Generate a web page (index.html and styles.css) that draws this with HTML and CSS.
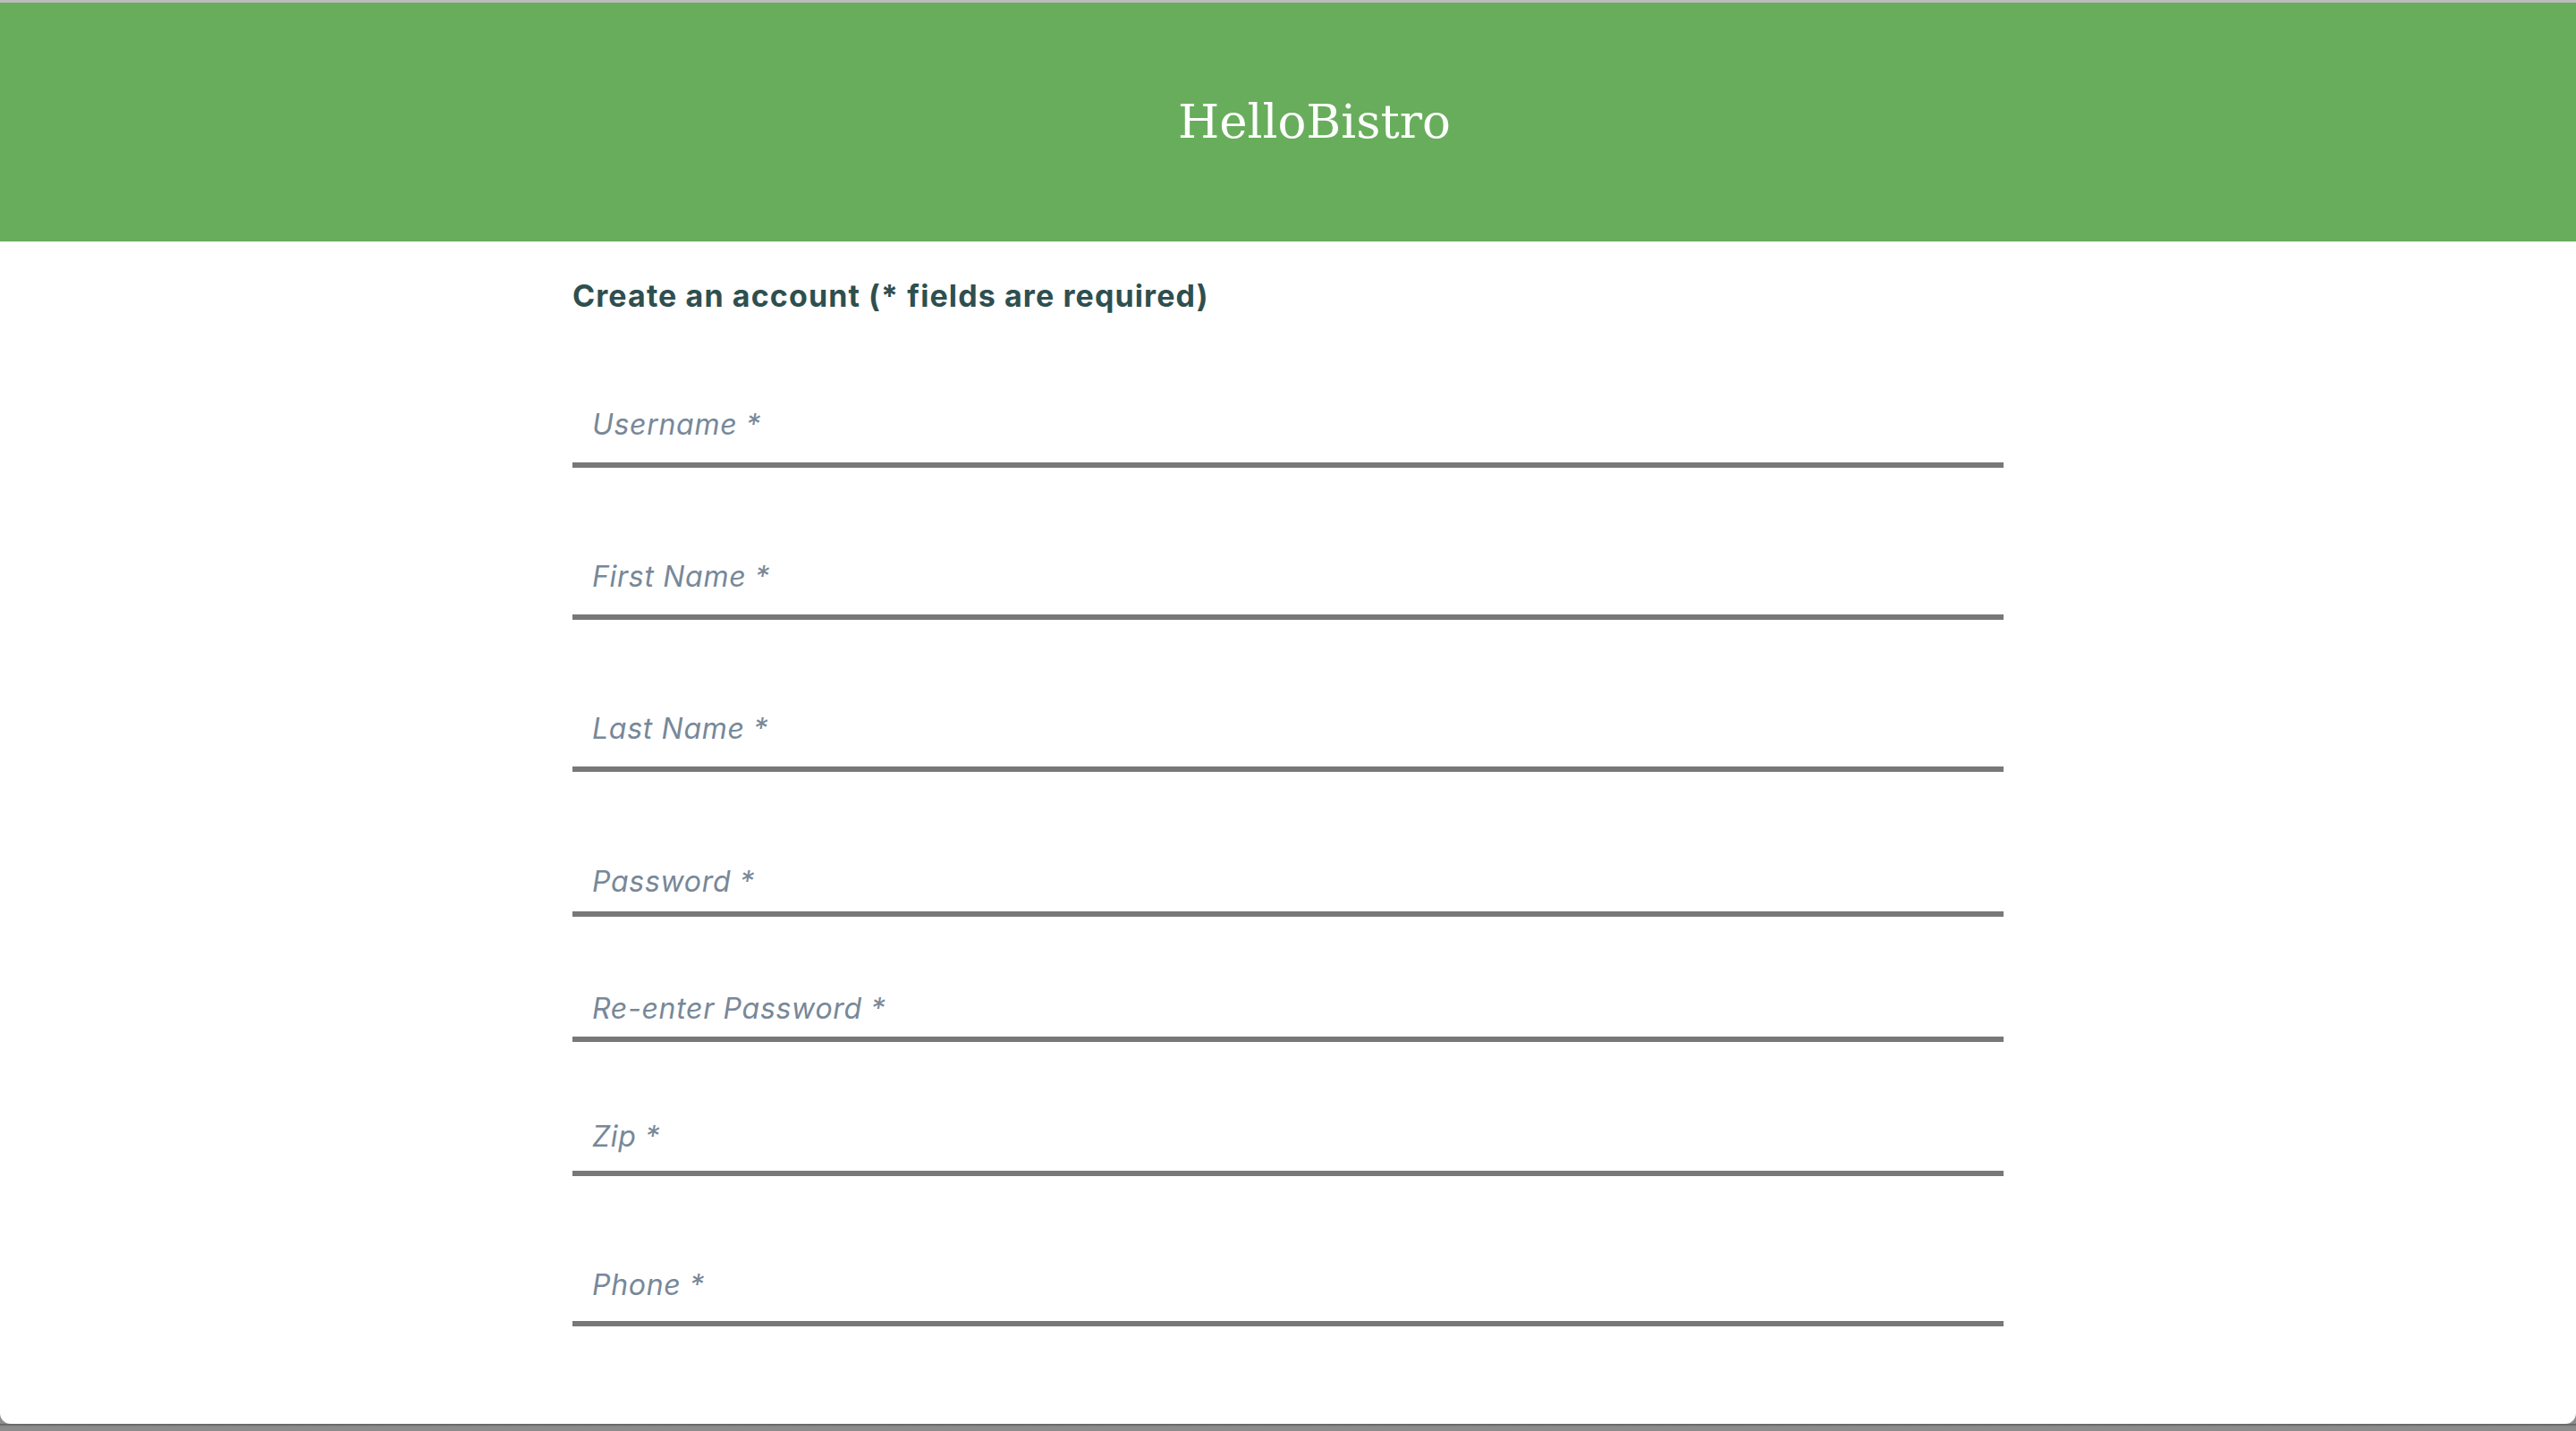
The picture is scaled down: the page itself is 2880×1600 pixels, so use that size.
FILE: index.html
```html
<!DOCTYPE html>
<html lang="en">
<head>
<meta charset="utf-8">
<title>HelloBistro - Create an account</title>
<link rel="stylesheet" href="styles.css">
</head>
<body>
<div class="window">
  <header class="topbar">
    <h1 class="brand">HelloBistro</h1>
  </header>
  <main class="content">
    <h2 class="form-title">Create an account (* fields are required)</h2>
    <form class="signup">
      <input class="field field-first" type="text" placeholder="Username *">
      <input class="field" type="text" placeholder="First Name *">
      <input class="field" type="text" placeholder="Last Name *">
      <input class="field field-pass" type="password" placeholder="Password *">
      <input class="field field-repass" type="password" placeholder="Re-enter Password *">
      <input class="field field-zip" type="text" placeholder="Zip *">
      <input class="field field-phone" type="text" placeholder="Phone *">
    </form>
  </main>
</div>
</body>
</html>
```

FILE: styles.css
```css
html, body {
  margin: 0;
  padding: 0;
}

body {
  background: linear-gradient(#5a5a5a, #8c8c8c 3px, #8c8c8c);
  font-family: Inter, "Liberation Sans", sans-serif;
}

.window {
  height: 1592px;
  box-sizing: border-box;
  background: #ffffff;
  border-top: 3px solid #bcbcbc;
  border-radius: 0 0 12px 12px;
  overflow: hidden;
}

.topbar {
  background: #68ad5c;
  height: 267px;
  box-sizing: border-box;
  padding: 101px 0 0 59px;
  text-align: center;
}

.brand {
  margin: 0;
  font-family: "DejaVu Serif", "Liberation Serif", serif;
  font-weight: normal;
  font-size: 53px;
  line-height: 64px;
  color: #ffffff;
}

.content {
  width: 1600px;
  margin: 0 auto;
}

.form-title {
  margin: 41px 0 0;
  font-size: 34px;
  font-weight: 700;
  letter-spacing: 1.1px;
  line-height: 39px;
  color: #2f4f4f;
}

.signup {
  display: flex;
  flex-direction: column;
}

.field {
  display: block;
  width: 100%;
  box-sizing: border-box;
  height: 68px;
  margin: 102px 0 0;
  padding: 0 22px 23px;
  border: none;
  border-bottom: 6px solid #787878;
  background: transparent;
  font-family: Inter, "Liberation Sans", sans-serif;
  font-size: 32px;
  font-style: italic;
  letter-spacing: 0.7px;
  color: #333;
  outline: none;
}

.field::placeholder {
  color: #778899;
  font-style: italic;
  opacity: 1;
}

.field-first {
  margin-top: 104px;
  height: 69px;
  padding-bottom: 23px;
}

.field-pass {
  height: 60px;
  padding-bottom: 14px;
}

.field-repass {
  margin-top: 82px;
  height: 58px;
  padding-bottom: 12px;
}

.field-zip {
  margin-top: 85px;
  height: 65px;
  padding-bottom: 19px;
}

.field-phone {
  margin-top: 101px;
  height: 67px;
  padding-bottom: 21px;
}
```
